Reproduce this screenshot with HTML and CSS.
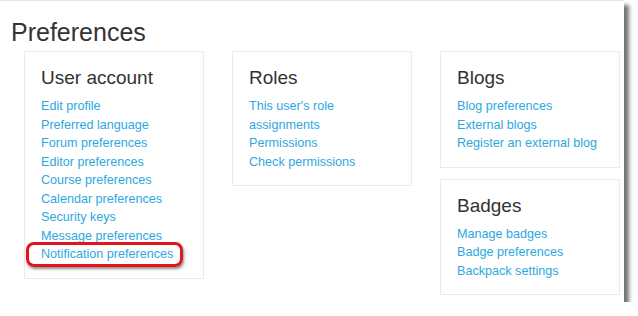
FILE: index.html
```html
<!DOCTYPE html>
<html lang="en">
<head>
  <meta charset="UTF-8">
  <title>Preferences</title>
  <link rel="stylesheet" href="styles.css">
</head>
<body>

<div class="frame">
  <h1>Preferences</h1>

  <div class="columns">
    <div class="card">
      <h3>User account</h3>
      <ul>
        <li><a href="#">Edit profile</a></li>
        <li><a href="#">Preferred language</a></li>
        <li><a href="#">Forum preferences</a></li>
        <li><a href="#">Editor preferences</a></li>
        <li><a href="#">Course preferences</a></li>
        <li><a href="#">Calendar preferences</a></li>
        <li><a href="#">Security keys</a></li>
        <li><a href="#">Message preferences</a></li>
        <li><a href="#" class="highlight">Notification preferences</a></li>
      </ul>
    </div>

    <div class="card">
      <h3>Roles</h3>
      <ul>
        <li><a href="#">This user's role assignments</a></li>
        <li><a href="#">Permissions</a></li>
        <li><a href="#">Check permissions</a></li>
      </ul>
    </div>

    <div class="stack">
      <div class="card">
        <h3>Blogs</h3>
        <ul>
          <li><a href="#">Blog preferences</a></li>
          <li><a href="#">External blogs</a></li>
          <li><a href="#">Register an external blog</a></li>
        </ul>
      </div>
      <div class="card">
        <h3>Badges</h3>
        <ul>
          <li><a href="#">Manage badges</a></li>
          <li><a href="#">Badge preferences</a></li>
          <li><a href="#">Backpack settings</a></li>
        </ul>
      </div>
    </div>
  </div>
</div>

</body>
</html>
```

FILE: styles.css
```css
body {
  margin: 0;
  background: #fff;
  font-family: "Liberation Sans", Arial, sans-serif;
}

.frame {
  width: 624px;
  height: 302px;
  box-sizing: border-box;
  background: #fff;
  border-top: 1px solid #e6e6e6;
  box-shadow: 5px 5px 4px rgba(0, 0, 0, 0.55);
}

h1 {
  margin: 0;
  padding: 16px 0 0 11px;
  font-size: 25px;
  line-height: 30px;
  font-weight: normal;
  color: #333;
}

.columns {
  display: flex;
  align-items: flex-start;
  gap: 28px;
  padding: 4px 0 0 24px;
}

.stack {
  display: flex;
  flex-direction: column;
  gap: 11px;
}

.card {
  width: 180px;
  box-sizing: border-box;
  border: 1px solid #ebebeb;
  padding: 15px 12px 14px 16px;
}

.card h3 {
  margin: 0 0 8px;
  font-size: 19px;
  line-height: 22px;
  font-weight: normal;
  color: #333;
}

.card ul {
  list-style: none;
  margin: 0;
  padding: 0;
}

.card li {
  font-size: 12.6px;
  line-height: 18.5px;
}

.card a {
  color: #2ea8e0;
  text-decoration: none;
}

/* red marker around the notification link */
.card a.highlight {
  position: relative;
  display: inline-block;
}

.card a.highlight::after {
  content: "";
  position: absolute;
  left: -15px;
  right: -10px;
  top: -3px;
  bottom: -3px;
  border: 3px solid #e3141c;
  border-radius: 8px;
  box-shadow: 1px 2px 3px rgba(0, 0, 0, 0.45);
}
```
